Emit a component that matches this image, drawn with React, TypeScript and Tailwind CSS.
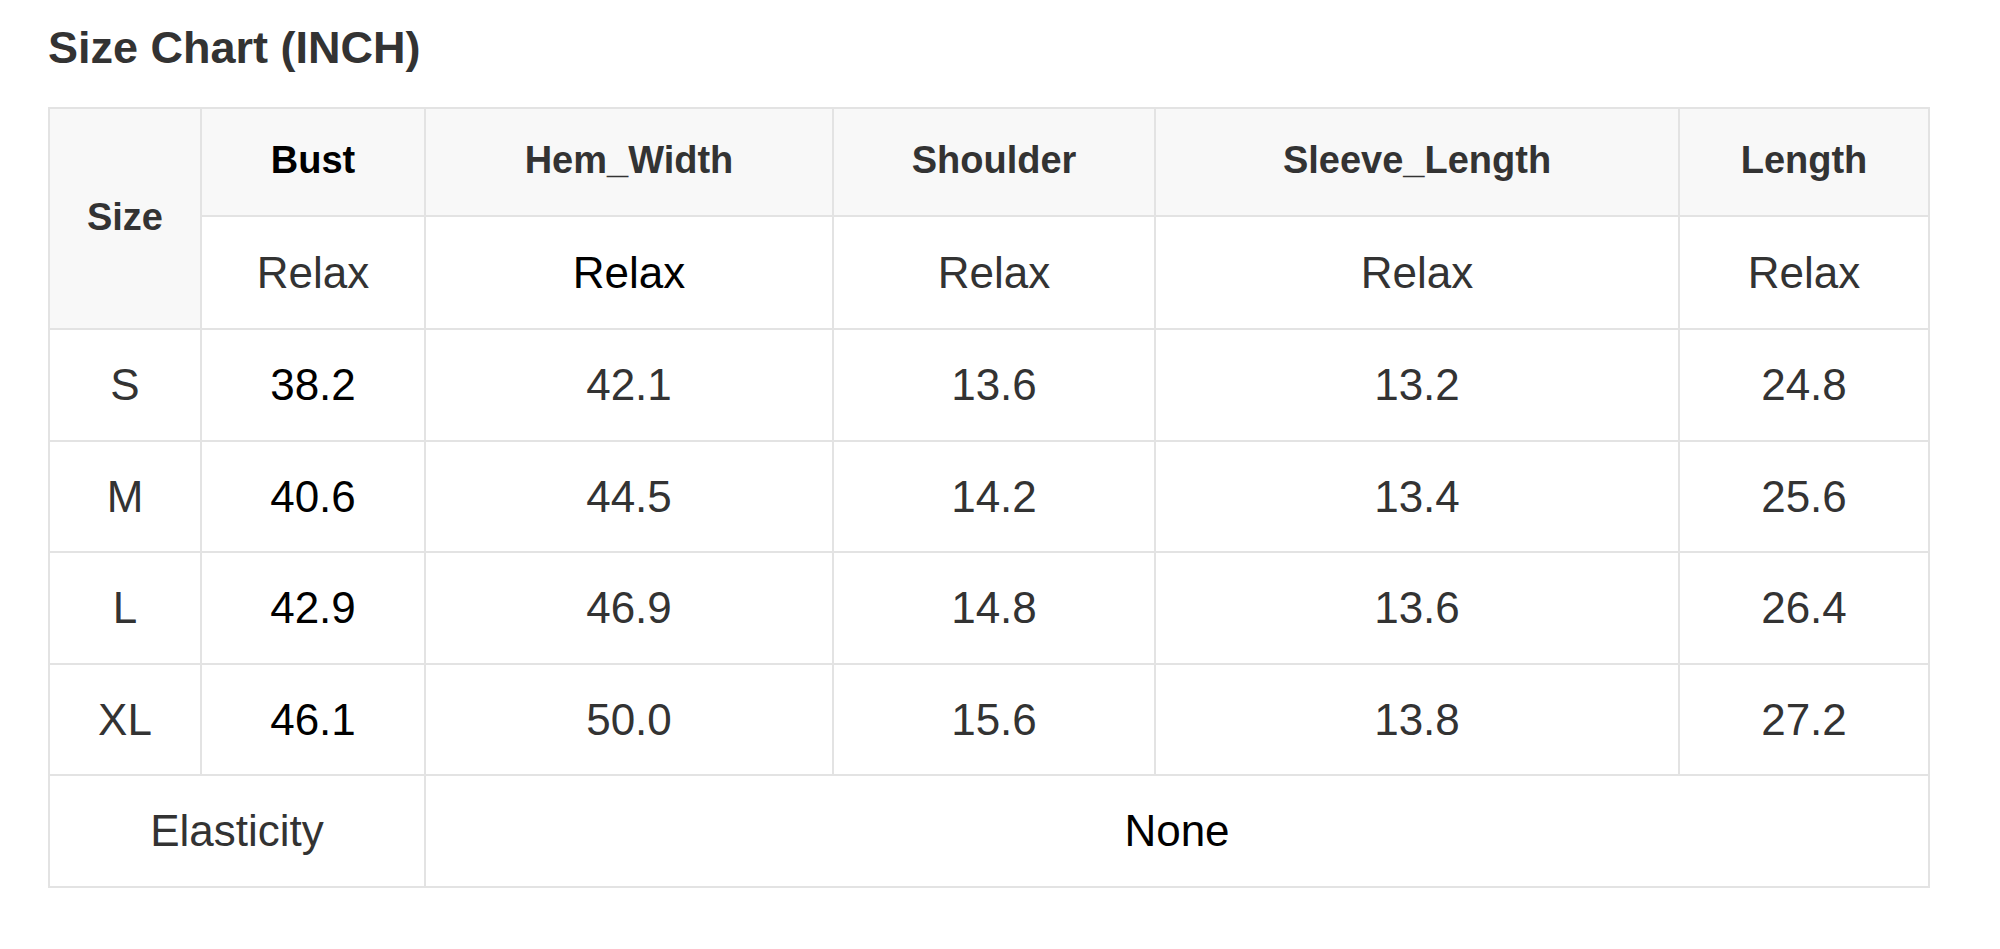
import React from "react";

const rows = [
  ["S", "38.2", "42.1", "13.6", "13.2", "24.8"],
  ["M", "40.6", "44.5", "14.2", "13.4", "25.6"],
  ["L", "42.9", "46.9", "14.8", "13.6", "26.4"],
  ["XL", "46.1", "50.0", "15.6", "13.8", "27.2"],
];
const heights = ["h-[112px]", "h-[111px]", "h-[112px]", "h-[111px]"];

export default function App() {
  const cell = "border-2 border-[#e3e3e3] text-center align-middle p-0";
  return (
    <div className="w-[2000px] h-[949px] bg-white pl-[48px] pt-[25px] font-['Liberation_Sans',Arial,sans-serif] text-[#333]">
      <h1 className="text-[45px] leading-[45px] font-bold text-[#333] m-0">Size Chart (INCH)</h1>
      <table className="mt-[37px] border-collapse table-fixed w-[1880px]">
        <colgroup>
          <col className="w-[152px]" />
          <col className="w-[224px]" />
          <col className="w-[408px]" />
          <col className="w-[322px]" />
          <col className="w-[524px]" />
          <col className="w-[250px]" />
        </colgroup>
        <tbody>
          <tr className="h-[108px] bg-[#f8f8f8]">
            <td rowSpan={2} className={`${cell} text-[38px] font-bold pb-[2px]`}>Size</td>
            <td className={`${cell} text-[38px] font-bold text-black pb-[4px]`}>Bust</td>
            <td className={`${cell} text-[38px] font-bold pb-[4px]`}>Hem_Width</td>
            <td className={`${cell} text-[38px] font-bold pb-[4px]`}>Shoulder</td>
            <td className={`${cell} text-[38px] font-bold pb-[4px]`}>Sleeve_Length</td>
            <td className={`${cell} text-[38px] font-bold pb-[4px]`}>Length</td>
          </tr>
          <tr className="h-[113px] text-[44px]">
            <td className={`${cell} bg-white`}>Relax</td>
            <td className={`${cell} bg-white text-black`}>Relax</td>
            <td className={`${cell} bg-white`}>Relax</td>
            <td className={`${cell} bg-white`}>Relax</td>
            <td className={`${cell} bg-white`}>Relax</td>
          </tr>
          {rows.map((r, i) => (
            <tr key={r[0]} className={`${heights[i]} text-[44px]`}>
              {r.map((v, j) => (
                <td key={j} className={`${cell} ${j === 1 ? "text-black" : ""}`}>{v}</td>
              ))}
            </tr>
          ))}
          <tr className="h-[112px] text-[44px]">
            <td colSpan={2} className={cell}>Elasticity</td>
            <td colSpan={4} className={`${cell} text-black`}>None</td>
          </tr>
        </tbody>
      </table>
    </div>
  );
}
